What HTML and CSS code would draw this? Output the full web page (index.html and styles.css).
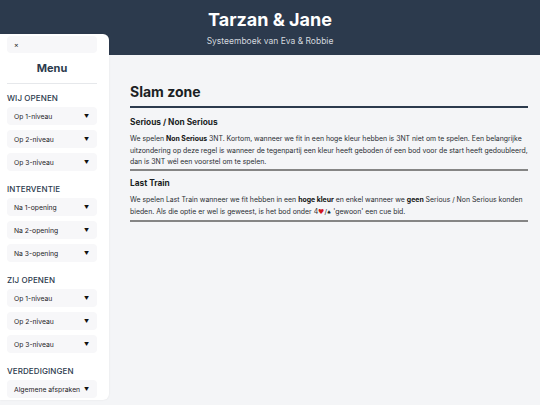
FILE: index.html
```html
<!DOCTYPE html>
<html lang="nl">
<head>
<meta charset="utf-8">
<title>Tarzan &amp; Jane</title>
<link rel="stylesheet" href="styles.css">
</head>
<body>
<header class="topbar">
  <h1 class="title">Tarzan &amp; Jane</h1>
  <p class="subtitle">Systeemboek van Eva &amp; Robbie</p>
</header>

<nav class="sidebar">
  <div class="close">×</div>
  <div class="menu-title">Menu</div>
  <div class="divider"></div>

  <div class="section">Wij openen</div>
  <div class="item"><span>Op 1-niveau</span><span class="caret">▼</span></div>
  <div class="item"><span>Op 2-niveau</span><span class="caret">▼</span></div>
  <div class="item"><span>Op 3-niveau</span><span class="caret">▼</span></div>

  <div class="section">Interventie</div>
  <div class="item"><span>Na 1-opening</span><span class="caret">▼</span></div>
  <div class="item"><span>Na 2-opening</span><span class="caret">▼</span></div>
  <div class="item"><span>Na 3-opening</span><span class="caret">▼</span></div>

  <div class="section">Zij openen</div>
  <div class="item"><span>Op 1-niveau</span><span class="caret">▼</span></div>
  <div class="item"><span>Op 2-niveau</span><span class="caret">▼</span></div>
  <div class="item"><span>Op 3-niveau</span><span class="caret">▼</span></div>

  <div class="section">Verdedigingen</div>
  <div class="item"><span>Algemene afspraken</span><span class="caret">▼</span></div>
</nav>

<main class="content">
  <h2 class="page-title">Slam zone</h2>

  <h3 class="sub">Serious / Non Serious</h3>
  <p class="text">We spelen <b>Non Serious</b> 3NT. Kortom, wanneer we fit in een hoge kleur hebben is 3NT niet om te spelen. Een belangrijke uitzondering op deze regel is wanneer de tegenpartij een kleur heeft geboden óf een bod voor de start heeft gedoubleerd, dan is 3NT wél een voorstel om te spelen.</p>
  <hr class="rule">

  <h3 class="sub">Last Train</h3>
  <p class="text">We spelen Last Train wanneer we fit hebben in een <b>hoge kleur</b> en enkel wanneer we <b>geen</b> Serious / Non Serious konden bieden. Als die optie er wel is geweest, is het bod onder 4<span class="heart">♥</span>/<span class="spade">♠</span> 'gewoon' een cue bid.</p>
  <hr class="rule">
</main>
</body>
</html>
```

FILE: styles.css
```css
* { box-sizing: border-box; }

html, body {
  margin: 0;
  padding: 0;
}

body {
  font-family: Inter, "Noto Sans", "Liberation Sans", sans-serif;
  background: #f4f5f7;
  color: #1f2328;
  width: 540px;
  min-height: 405px;
  position: relative;
}

.topbar {
  background: #2c3a4d;
  height: 55px;
  text-align: center;
  color: #ffffff;
  padding-top: 9px;
}

.title {
  margin: 0;
  font-size: 18px;
  line-height: 22px;
  font-weight: 700;
}

.subtitle {
  margin: 5px 0 0;
  font-size: 8.5px;
  line-height: 11px;
  color: #d3d8df;
}

.sidebar {
  position: absolute;
  top: 34px;
  left: 0;
  width: 109px;
  background: #ffffff;
  border-radius: 0 6px 6px 0;
  padding: 2px 12px 2px 7px;
  display: flex;
  flex-direction: column;
  box-shadow: 0 0 2px rgba(0, 0, 0, 0.08);
}

.close {
  height: 17px;
  background: #f7f7f9;
  border-radius: 4px;
  font-size: 7px;
  line-height: 17px;
  padding-left: 7px;
  color: #222;
}

.menu-title {
  margin-top: 8px;
  text-align: center;
  font-size: 11px;
  line-height: 14px;
  font-weight: 700;
  color: #2c3a4d;
}

.divider {
  margin-top: 8px;
  height: 1px;
  background: #e6e8eb;
}

.section {
  margin-top: 9px;
  font-size: 8px;
  line-height: 10px;
  font-weight: 500;
  text-transform: uppercase;
  color: #2c3a4d;
  letter-spacing: 0.1px;
}

.item + .section {
  margin-top: 13px;
}

.item {
  margin-top: 5px;
  height: 18px;
  background: #f7f7f9;
  border-radius: 4px;
  display: flex;
  align-items: center;
  justify-content: space-between;
  padding: 0 8px 0 7px;
  font-size: 6.8px;
  color: #1f2328;
}

.section + .item {
  margin-top: 4px;
}

.caret {
  font-size: 5px;
  color: #111;
}

.content {
  margin-left: 109px;
  padding: 28px 12px 0 21px;
}

.page-title {
  margin: 0;
  font-size: 14px;
  line-height: 17px;
  font-weight: 700;
  color: #1b1f24;
  padding-bottom: 6px;
  border-bottom: 2px solid #2c3a4d;
}

.sub {
  margin: 9px 0 0;
  font-size: 8.3px;
  line-height: 11px;
  font-weight: 700;
  color: #1b1f24;
}

.rule + .sub {
  margin-top: 7px;
}

.text {
  margin: 5px 0 1.5px;
  font-size: 6.9px;
  line-height: 11.5px;
  color: #2a2e33;
}

.text b {
  font-weight: 700;
  color: #111;
}

.heart {
  color: #d0161b;
  font-family: "DejaVu Sans", sans-serif;
  font-size: 7px;
}

.spade {
  color: #222;
  font-family: "DejaVu Sans", sans-serif;
  font-size: 5px;
}

.rule {
  margin: 0;
  border: 0;
  height: 2px;
  background: #858585;
}
```
